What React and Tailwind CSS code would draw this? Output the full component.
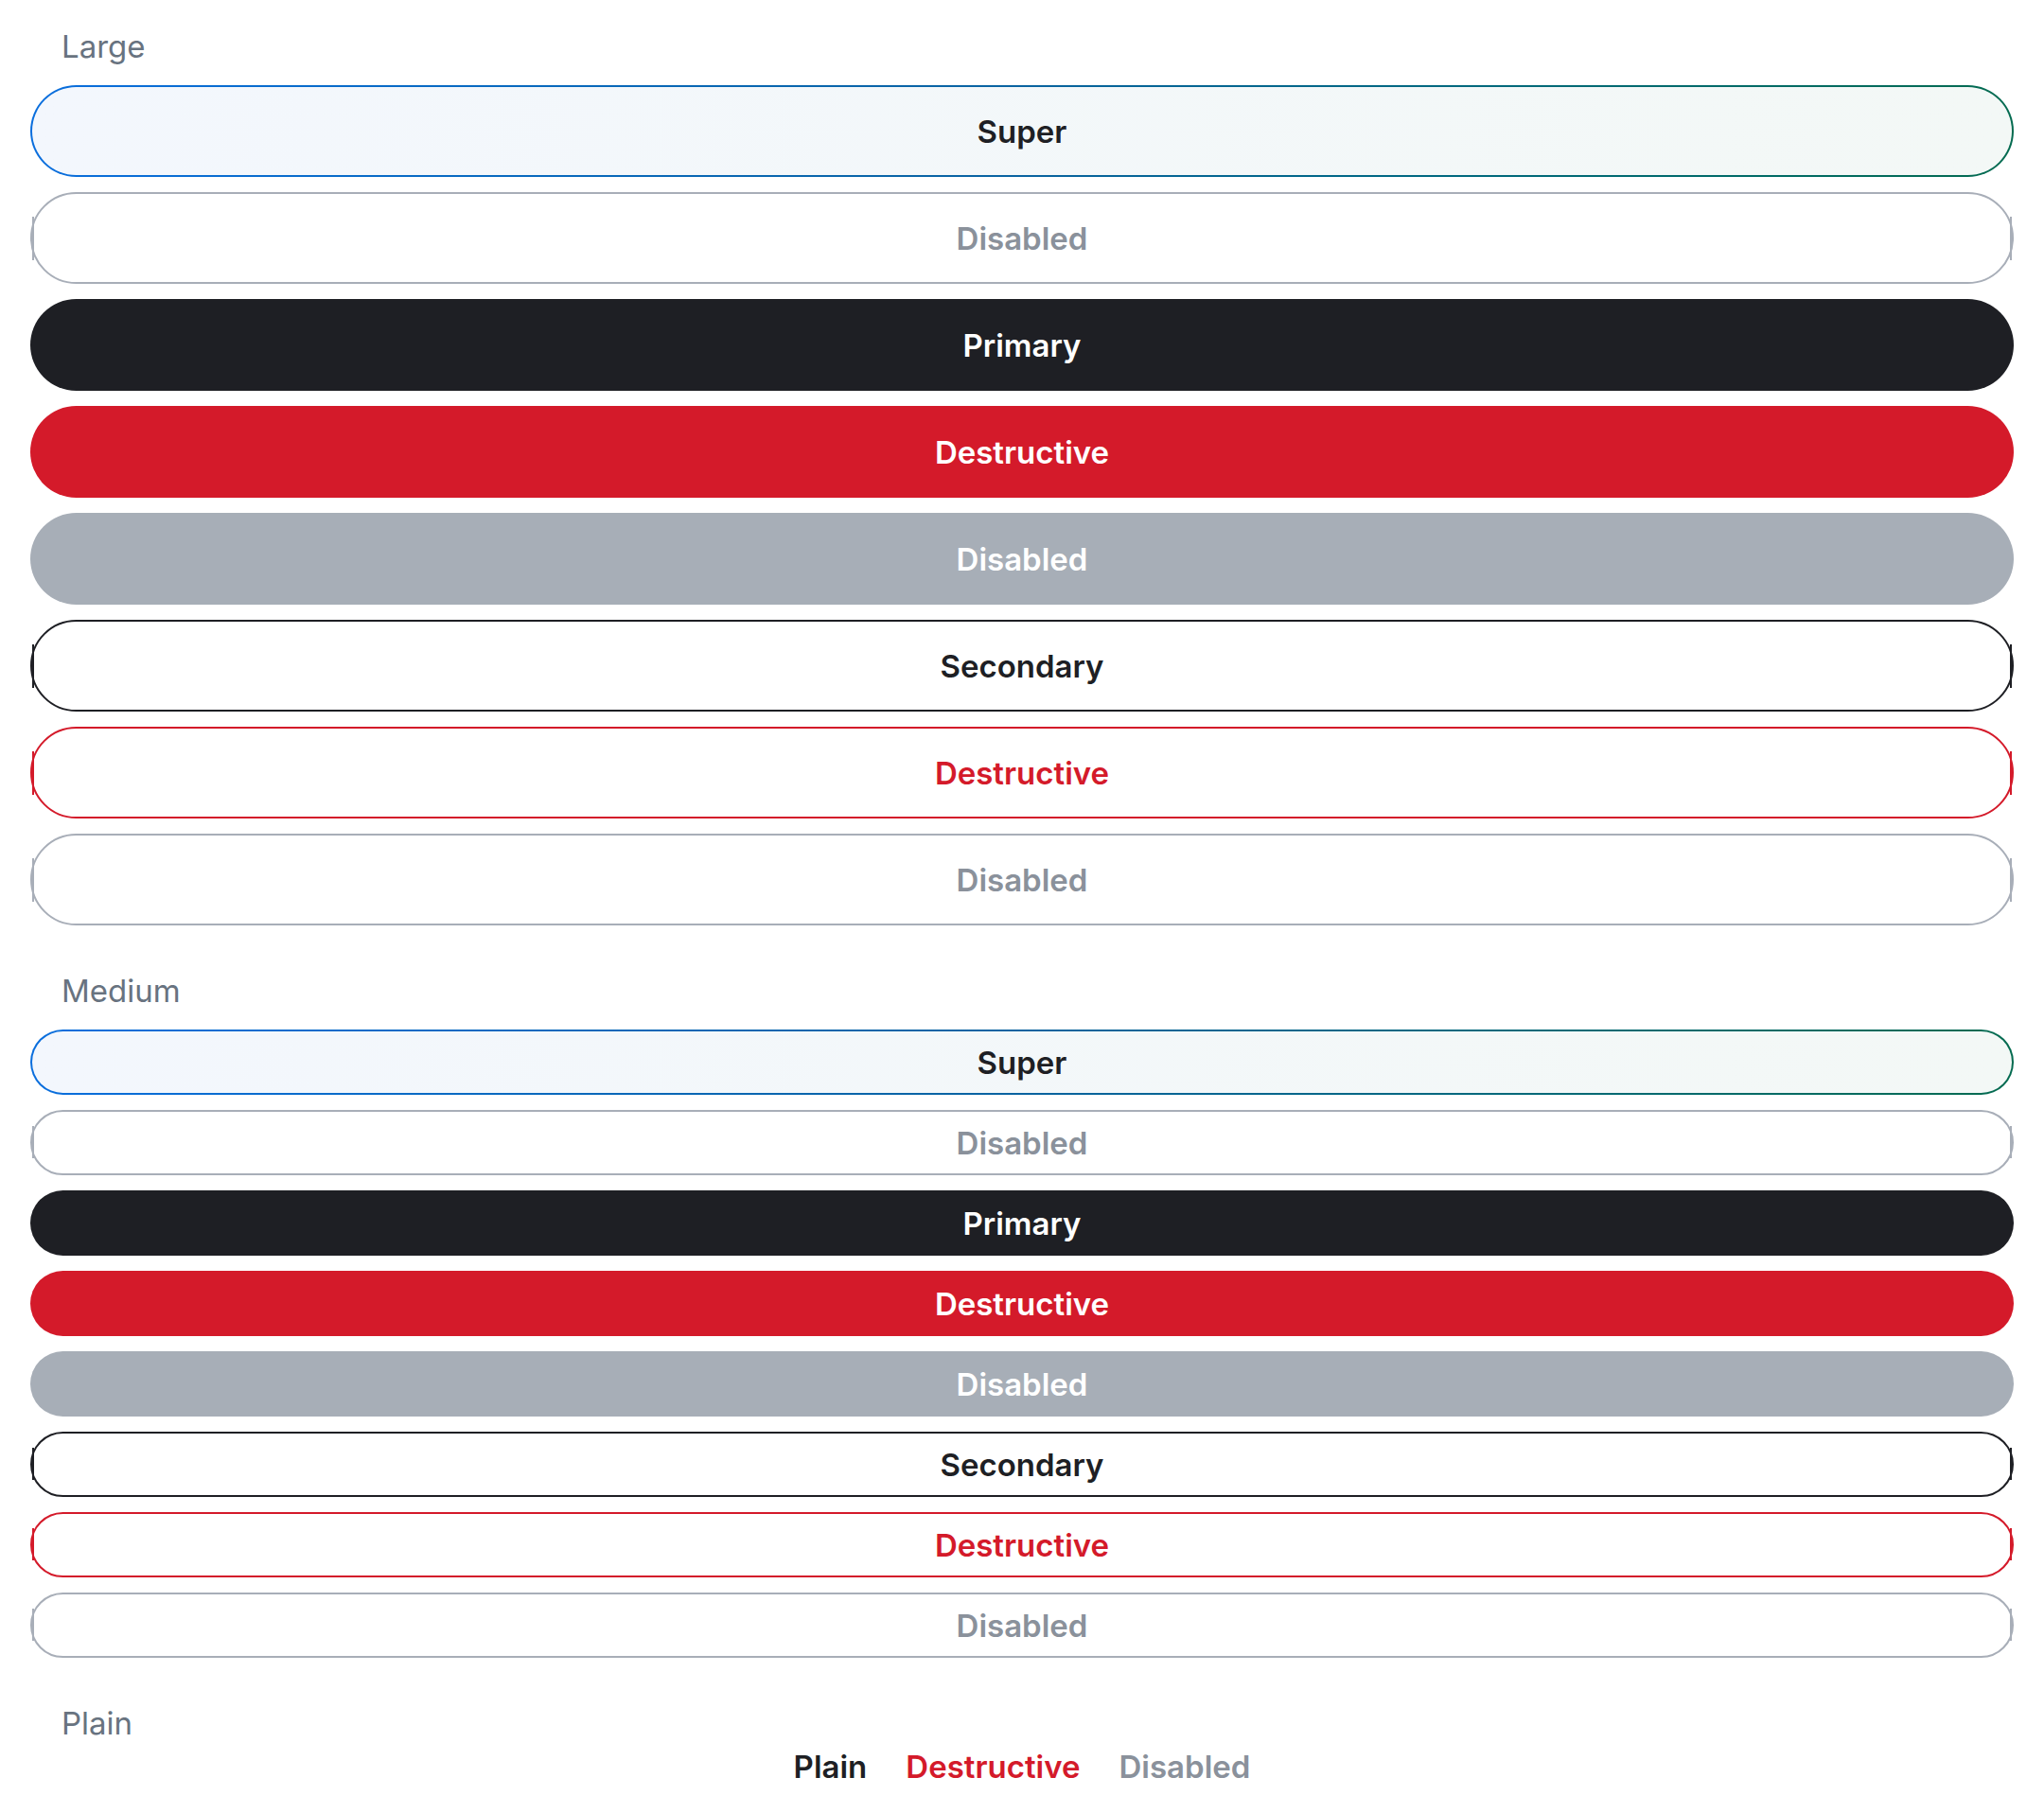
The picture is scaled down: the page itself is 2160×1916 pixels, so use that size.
import React from "react";

const font = { fontFamily: "Inter, 'Noto Sans', sans-serif" };

const large = "h-[97px]";
const medium = "h-[69px]";

function EdgeTicks({ size, color }) {
  const pos = size === "large" ? "top-[24px] bottom-[23px]" : "top-[15px] bottom-[16px]";
  return (
    <>
      <span className={`absolute left-0 w-[2px] ${pos} ${color}`} />
      <span className={`absolute right-0 w-[2px] ${pos} ${color}`} />
    </>
  );
}

function SuperButton({ h }) {
  return (
    <button
      className={`w-full ${h} rounded-full p-[2px] bg-linear-to-r from-[#0a6edd] via-[#0a63a0] to-[#056b50]`}
    >
      <span className="flex h-full w-full items-center justify-center rounded-full bg-linear-to-r from-[#f3f7fd] to-[#f3f8f6] pt-[2px] text-[33px] font-semibold text-[#1e1f24]">
        Super
      </span>
    </button>
  );
}

function FilledButton({ h, label, bg, text = "text-white" }) {
  return (
    <button
      className={`w-full ${h} rounded-full ${bg} ${text} flex items-center justify-center pt-[2px] text-[33px] font-semibold`}
    >
      {label}
    </button>
  );
}

function OutlineButton({ h, size, label, border, text, tick }) {
  return (
    <button
      className={`relative w-full ${h} rounded-full border-2 ${border} ${text} bg-white flex items-center justify-center pt-[2px] text-[33px] font-semibold`}
    >
      <EdgeTicks size={size} color={tick} />
      {label}
    </button>
  );
}

function Section({ title, size }) {
  const h = size === "large" ? large : medium;
  return (
    <div>
      <div className="pl-[33px] text-[33px] leading-[40px] text-[#687380]">{title}</div>
      <div className="mt-[21px] flex flex-col gap-4">
        <SuperButton h={h} />
        <OutlineButton
          h={h}
          size={size}
          label="Disabled"
          border="border-[#a8aeb8]"
          text="text-[#8a919b]"
          tick="bg-[#a8aeb8]"
        />
        <FilledButton h={h} label="Primary" bg="bg-[#1e1f24]" />
        <FilledButton h={h} label="Destructive" bg="bg-[#d41a2a]" />
        <FilledButton h={h} label="Disabled" bg="bg-[#a7aeb7]" />
        <OutlineButton
          h={h}
          size={size}
          label="Secondary"
          border="border-[#1e1f24]"
          text="text-[#1e1f24]"
          tick="bg-[#1e1f24]"
        />
        <OutlineButton
          h={h}
          size={size}
          label="Destructive"
          border="border-[#d41a2a]"
          text="text-[#d41a2a]"
          tick="bg-[#d41a2a]"
        />
        <OutlineButton
          h={h}
          size={size}
          label="Disabled"
          border="border-[#a8aeb8]"
          text="text-[#8a919b]"
          tick="bg-[#a8aeb8]"
        />
      </div>
    </div>
  );
}

export default function App() {
  return (
    <div className="min-h-screen bg-white px-[32px] pt-[29px]" style={font}>
      <div className="flex flex-col gap-[49px]">
        <Section title="Large" size="large" />
        <Section title="Medium" size="medium" />
        <div>
          <div className="pl-[33px] text-[33px] leading-[40px] text-[#687380]">Plain</div>
          <div className="mt-[6px] flex justify-center gap-[41px] text-[33px] leading-[40px] font-semibold">
            <button className="text-[#1e1f24]">Plain</button>
            <button className="text-[#d41a2a]">Destructive</button>
            <button className="text-[#8a919b]">Disabled</button>
          </div>
        </div>
      </div>
    </div>
  );
}
